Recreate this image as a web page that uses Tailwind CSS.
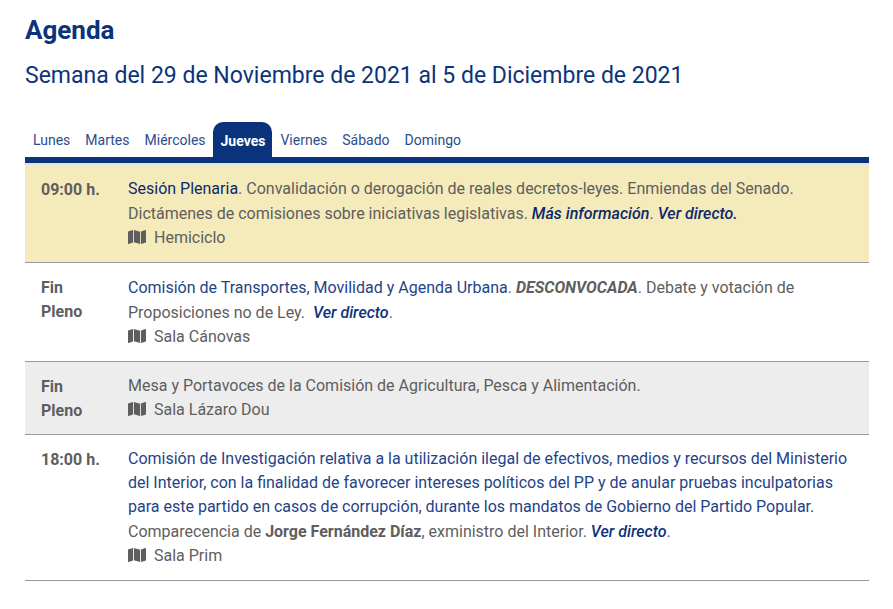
<!DOCTYPE html>
<html lang="es">
<head>
<meta charset="utf-8">
<meta name="viewport" content="width=device-width, initial-scale=1">
<title>Agenda</title>
<script src="https://cdn.jsdelivr.net/npm/@tailwindcss/browser@4"></script>
</head>
<body class="bg-white font-[Roboto,sans-serif] text-base leading-6 text-[#5e5e5e]">
<svg class="hidden" aria-hidden="true">
  <symbol id="map" viewBox="0 0 576 512" preserveAspectRatio="none">
    <path d="M0 117.700v346.300c0 11.300 11.400 19.100 21.900 14.900L160 432V32L20.100 72A32 32 0 0 0 0 101.700zM188 424l200 56V88L188 32v392zM554.100 33.200L416 80v400l139.900-40a32 32 0 0 0 20.100-29.700V48c0-11.300-11.400-19-21.900-14.800z"/>
  </symbol>
</svg>
<main class="pt-3 pr-6 pb-6 pl-[25px]">
  <h1 class="text-[26px] leading-9 font-bold text-[#0b337b]">Agenda</h1>
  <h2 class="mt-[10px] text-[23px] leading-9 text-[#0b337b]">Semana del 29 de Noviembre de 2021 al 5 de Diciembre de 2021</h2>
  <nav class="mt-7 flex border-b-6 border-[#0b337b] text-sm leading-5 text-[#2c4d8c]" aria-label="Días de la semana">
    <a href="#" class="pt-2 pr-[7px] pb-[7px] pl-2">Lunes</a>
    <a href="#" class="pt-2 pr-[7px] pb-[7px] pl-2">Martes</a>
    <a href="#" class="pt-2 pr-[7px] pb-[7px] pl-2">Miércoles</a>
    <a href="#" aria-current="date" class="rounded-t-[10px] bg-[#0b337b] pt-[9px] pr-[7px] pb-[6px] pl-2 font-bold text-white">Jueves</a>
    <a href="#" class="pt-2 pr-[7px] pb-[7px] pl-2">Viernes</a>
    <a href="#" class="pt-2 pr-[7px] pb-[7px] pl-2">Sábado</a>
    <a href="#" class="pt-2 pr-[7px] pb-[7px] pl-2">Domingo</a>
  </nav>
  <table class="w-full border-collapse border-t-2 border-[#dee2e6] text-left">
    <tbody>
      <tr class="border-b border-[#999] bg-[#f5eaba] align-top">
        <th scope="row" class="w-[87px] pt-[13px] pb-[11px] pl-4 font-bold whitespace-nowrap">09:00 h.</th>
        <td class="py-3 pr-4 pl-4"><a href="#" class="text-[#0b2a6b]">Sesión Plenaria</a>. Convalidación o derogación de reales decretos-leyes. Enmiendas del Senado. Dictámenes de comisiones sobre iniciativas legislativas. <a href="#" class="leading-[25px] font-medium text-[#0b2a6b] italic">Más información</a>. <a href="#" class="font-medium text-[#0b2a6b] italic">Ver directo.</a>
          <div class="flex items-start gap-2"><svg class="mt-[3px] h-4 w-[18px] fill-current" aria-hidden="true"><use href="#map"/></svg>Hemiciclo</div></td>
      </tr>
      <tr class="border-b border-[#999] align-top">
        <th scope="row" class="pt-[13px] pb-[11px] pl-4 font-bold">Fin<br>Pleno</th>
        <td class="py-3 pr-4 pl-4"><a href="#" class="text-[#1f4388]">Comisión de Transportes, Movilidad y Agenda Urbana</a>. <em class="leading-[25px] font-bold">DESCONVOCADA</em>. Debate y votación de Proposiciones no de Ley.&nbsp; <a href="#" class="leading-[25px] font-medium text-[#0b337b] italic">Ver directo</a>.
          <div class="flex items-start gap-2"><svg class="mt-[3px] h-4 w-[18px] fill-current" aria-hidden="true"><use href="#map"/></svg>Sala Cánovas</div></td>
      </tr>
      <tr class="border-b border-[#999] bg-[#ededed] align-top">
        <th scope="row" class="pt-[13px] pb-[11px] pl-4 font-bold">Fin<br>Pleno</th>
        <td class="py-3 pr-4 pl-4">Mesa y Portavoces de la Comisión de Agricultura, Pesca y Alimentación.
          <div class="flex items-start gap-2"><svg class="mt-[3px] h-4 w-[18px] fill-current" aria-hidden="true"><use href="#map"/></svg>Sala Lázaro Dou</div></td>
      </tr>
      <tr class="border-b border-[#999] align-top">
        <th scope="row" class="pt-[13px] pb-[11px] pl-4 font-bold whitespace-nowrap">18:00 h.</th>
        <td class="py-3 pr-4 pl-4"><a href="#" class="text-[#1f4388]">Comisión de Investigación relativa a la utilización ilegal de efectivos, medios y recursos del Ministerio del Interior, con la finalidad de favorecer intereses políticos del PP y de anular pruebas inculpatorias para este partido en casos de corrupción, durante los mandatos de Gobierno del Partido Popular.</a> Comparecencia de <strong class="font-bold">Jorge Fernández Díaz</strong>, exministro del Interior. <a href="#" class="leading-[25px] font-medium text-[#0b337b] italic">Ver directo</a>.
          <div class="flex items-start gap-2"><svg class="mt-[3px] h-4 w-[18px] fill-current" aria-hidden="true"><use href="#map"/></svg>Sala Prim</div></td>
      </tr>
    </tbody>
  </table>
</main>
</body>
</html>
